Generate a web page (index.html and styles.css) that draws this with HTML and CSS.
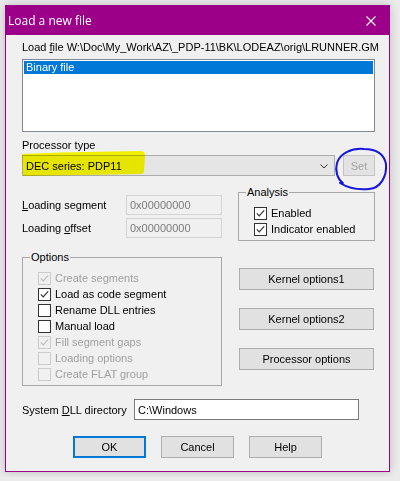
FILE: index.html
```html
<!DOCTYPE html>
<html lang="en">
<head>
    <meta charset="UTF-8">
    <meta name="viewport" content="width=device-width, initial-scale=1.0">
    <title>Load a new file</title>
    <link rel="stylesheet" href="styles.css">
</head>
<body>
    <div class="window">
        <div class="titlebar">
            <span class="title">Load a new file</span>
            <svg class="close" width="10" height="10" viewBox="0 0 10 10">
                <path d="M0.5 0.5L9.5 9.5M9.5 0.5L0.5 9.5" stroke="#fff" stroke-width="1.1" fill="none"/>
            </svg>
        </div>

        <div class="content">
            <div class="label file-line">Load <u>f</u>ile W:\Doc\My_Work\AZ\_PDP-11\BK\LODEAZ\orig\LRUNNER.GM</div>
            <div class="listbox">
                <div class="item selected">Binary file</div>
            </div>

            <div class="label ptype">Processor type</div>
            <div class="combo-row">
                <div class="combo">
                    <span>DEC series: PDP11</span>
                    <svg class="chevron" width="8" height="5" viewBox="0 0 8 5">
                        <path d="M0.5 0.5L4 4L7.5 0.5" stroke="#333" stroke-width="1" fill="none"/>
                    </svg>
                </div>
                <div class="btn set disabled">Set</div>

                <!-- marker strokes drawn on top of the dialog -->
                <svg class="marker" width="124" height="27" viewBox="0 0 124 27">
                    <path d="M0 4 L40 2.5 L118 1 Q123 1 123 5 L122 21 Q122 24 118 24 L60 25 L1 26 Z" fill="#ffff00"/>
                </svg>
                <svg class="scribble" width="56" height="46" viewBox="0 0 56 46">
                    <path d="M10 37 C4 33 2 24 4 17 C7 7 19 2 31 3 C43 3 51 8 53 18 C54 30 48 42 36 43 C26 44 15 42 7 37"
                          stroke="#1616e0" stroke-width="2" fill="none" stroke-linecap="round"/>
                </svg>
            </div>

            <div class="middle-row">
                <div class="fields">
                    <div class="field">
                        <span class="field-label"><u>L</u>oading segment</span>
                        <div class="edit readonly">0x00000000</div>
                    </div>
                    <div class="field">
                        <span class="field-label">Loading <u>o</u>ffset</span>
                        <div class="edit readonly">0x00000000</div>
                    </div>
                </div>
                <div class="group analysis">
                    <span class="legend">Analysis</span>
                    <div class="check"><span class="box checked"></span>Enabled</div>
                    <div class="check"><span class="box checked"></span>Indicator enabled</div>
                </div>
            </div>

            <div class="options-row">
                <div class="group options">
                    <span class="legend">Options</span>
                    <div class="check disabled"><span class="box checked"></span>Create segments</div>
                    <div class="check"><span class="box checked"></span>Load as code segment</div>
                    <div class="check"><span class="box"></span>Rename DLL entries</div>
                    <div class="check"><span class="box"></span>Manual load</div>
                    <div class="check disabled"><span class="box checked"></span>Fill segment gaps</div>
                    <div class="check disabled"><span class="box"></span>Loading options</div>
                    <div class="check disabled"><span class="box"></span>Create FLAT group</div>
                </div>
                <div class="side-buttons">
                    <div class="btn wide">Kernel options1</div>
                    <div class="btn wide">Kernel options2</div>
                    <div class="btn wide">Processor options</div>
                </div>
            </div>

            <div class="dll-row">
                <span class="dll-label">System <u>D</u>LL directory</span>
                <div class="edit dll">C:\Windows</div>
            </div>

            <div class="button-row">
                <div class="btn default">OK</div>
                <div class="btn">Cancel</div>
                <div class="btn">Help</div>
            </div>
        </div>
    </div>
</body>
</html>
```

FILE: styles.css
```css
body {
    margin: 0;
    background: #ebebeb;
    font-family: 'Liberation Sans', Arial, sans-serif;
    font-size: 11px;
    color: #000;
}

.window {
    margin: 5px;
    width: 385px;
    height: 467px;
    box-sizing: border-box;
    border: 1px solid #9c0089;
    background: #f0f0f0;
    box-shadow: 0 0 9px rgba(0, 0, 0, 0.2);
    display: flex;
    flex-direction: column;
    overflow: hidden;
}

.titlebar {
    height: 29px;
    flex: none;
    background: #9c0089;
    color: #fff;
    display: flex;
    align-items: center;
    justify-content: space-between;
    padding: 0 13px 0 2px;
    font-family: 'Open Sans', sans-serif;
    font-size: 12px;
}

.content {
    padding: 6px 14px 0 16px;
}

.label {
    line-height: 13px;
    white-space: nowrap;
}

.file-line {
    overflow: hidden;
    margin-right: -14px;
}

.listbox {
    margin-top: 5px;
    height: 73px;
    box-sizing: border-box;
    border: 1px solid #828790;
    background: #fff;
    padding: 1px;
}

.item {
    height: 13px;
    line-height: 13px;
    padding-left: 2px;
}

.item.selected {
    background: #0078d7;
    color: #fff;
}

.ptype {
    margin-top: 7px;
}

.combo-row {
    margin-top: 3px;
    display: flex;
    gap: 8px;
    position: relative;
}

.combo {
    width: 313px;
    height: 21px;
    box-sizing: border-box;
    border: 1px solid #acacac;
    background: #e5e5e5;
    display: flex;
    align-items: center;
    justify-content: space-between;
    padding: 0 6px 0 3px;
}

.chevron {
    margin-top: 1px;
}

.marker {
    position: absolute;
    left: 0;
    top: -5px;
    mix-blend-mode: multiply;
}

.scribble {
    position: absolute;
    left: 311px;
    top: -9px;
}

.btn {
    width: 73px;
    height: 22px;
    box-sizing: border-box;
    border: 1px solid #adadad;
    background: #e1e1e1;
    display: flex;
    align-items: center;
    justify-content: center;
}

.btn.set {
    width: 32px;
    height: 21px;
}

.btn.disabled {
    background: #e3e3e3;
    border-color: #c4c4c4;
    color: #a3a3a3;
}

.btn.default {
    border: 2px solid #0078d7;
}

.btn.wide {
    width: 135px;
}

.middle-row {
    margin-top: 16px;
    display: flex;
}

.fields {
    margin-top: 3px;
    display: flex;
    flex-direction: column;
    gap: 3px;
}

.field {
    display: flex;
    align-items: center;
}

.field-label {
    width: 104px;
}

.edit {
    height: 20px;
    box-sizing: border-box;
    border: 1px solid #7a7a7a;
    background: #fff;
    display: flex;
    align-items: center;
    padding-left: 3px;
}

.edit.readonly {
    width: 96px;
    background: #f0f0f0;
    border-color: #d4d4d4;
    color: #7a7a7a;
}

.group {
    position: relative;
    box-sizing: border-box;
    border: 1px solid #a8a8a8;
    padding: 12px 0 0 15px;
}

.legend {
    position: absolute;
    top: -7px;
    left: 7px;
    line-height: 13px;
    padding: 0 1px;
    background: #f0f0f0;
}

.analysis {
    margin-left: 16px;
    width: 137px;
    height: 49px;
}

.check {
    height: 16px;
    display: flex;
    align-items: center;
    gap: 4px;
    white-space: nowrap;
}

.box {
    width: 13px;
    height: 13px;
    box-sizing: border-box;
    border: 1px solid #333;
    background: #fff;
    flex: none;
}

.box.checked {
    background: #fff url("data:image/svg+xml,%3Csvg xmlns='http://www.w3.org/2000/svg' width='11' height='11' viewBox='0 0 11 11'%3E%3Cpath d='M1.8 5.4 L4.2 7.9 L9.2 2.4' stroke='%23333' stroke-width='1.2' fill='none'/%3E%3C/svg%3E") no-repeat center;
}

.check.disabled {
    color: #a0a0a0;
}

.check.disabled .box {
    border-color: #cccccc;
    background-color: #f0f0f0;
}

.check.disabled .box.checked {
    background-image: url("data:image/svg+xml,%3Csvg xmlns='http://www.w3.org/2000/svg' width='11' height='11' viewBox='0 0 11 11'%3E%3Cpath d='M1.8 5.4 L4.2 7.9 L9.2 2.4' stroke='%23bcbcbc' stroke-width='1.2' fill='none'/%3E%3C/svg%3E");
}

.options-row {
    margin-top: 16px;
    display: flex;
}

.options {
    width: 200px;
    height: 129px;
}

.side-buttons {
    margin-left: 17px;
    padding-top: 11px;
    display: flex;
    flex-direction: column;
    gap: 18px;
}

.dll-row {
    margin-top: 13px;
    display: flex;
    align-items: center;
}

.dll-label {
    width: 112px;
}

.edit.dll {
    width: 225px;
    height: 21px;
}

.button-row {
    margin-top: 16px;
    padding-left: 51px;
    display: flex;
    gap: 15px;
}
```
